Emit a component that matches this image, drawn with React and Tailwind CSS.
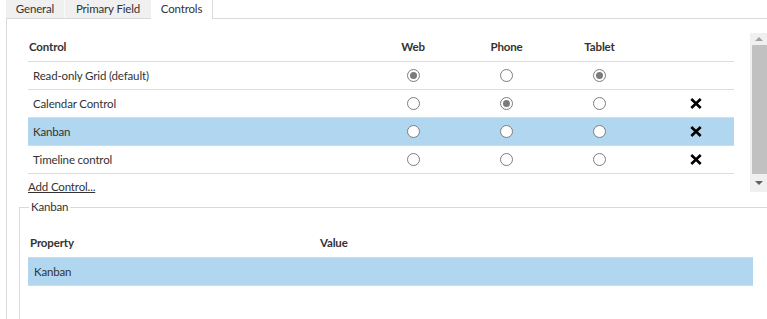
import React from "react";

function Radio({ checked }) {
  return (
    <span className="flex h-[13px] w-[13px] items-center justify-center rounded-full border border-[#7d7d7d] bg-white">
      {checked && <span className="h-[7px] w-[7px] rounded-full bg-[#7b7b7b]" />}
    </span>
  );
}

function XIcon() {
  return (
    <svg width="12" height="11" viewBox="0 0 12 11" className="block">
      <path d="M1.3 1 L10.7 10 M10.7 1 L1.3 10" stroke="#000" strokeWidth="2.6" strokeLinecap="butt" />
    </svg>
  );
}

const rows = [
  { name: "Read-only Grid (default)", web: true, phone: false, tablet: true, del: false },
  { name: "Calendar Control", web: false, phone: true, tablet: false, del: true },
  { name: "Kanban", web: false, phone: false, tablet: false, del: true, selected: true },
  { name: "Timeline control", web: false, phone: false, tablet: false, del: true },
];

export default function App() {
  return (
    <div
      className="relative h-[319px] w-[767px] overflow-hidden bg-white text-[11.5px] tracking-[-0.15px] text-[#333]"
      style={{ fontFamily: 'Lato, "Noto Sans", sans-serif' }}
    >
      {/* Tabs */}
      <div className="flex h-[19px] pl-[6px] leading-[18px]">
        <div className="w-[58px] border-b border-[#d9d9d9] bg-[#f0f0f0] text-center">General</div>
        <div className="w-[1px] border-b border-[#d9d9d9] bg-[#fafafa]" />
        <div className="w-[86px] border-b border-[#d9d9d9] bg-[#f0f0f0] text-center">Primary Field</div>
        <div className="w-[62px] border-r border-[#d9d9d9] bg-white text-center">Controls</div>
        <div className="flex-1 border-b border-[#d9d9d9]" />
      </div>

      {/* Panel */}
      <div className="ml-[6px] h-[300px] border-l border-[#d9d9d9]">
        {/* Controls grid */}
        <div className="flex gap-[16px] pl-[21px] pt-[14px]">
          <div className="w-[709px]">
            <div className="flex h-[29px] items-center border-b border-[#dcdcdc] font-bold">
              <div className="w-[338px] pl-[1px]">Control</div>
              <div className="w-[94px] text-center">Web</div>
              <div className="w-[93px] text-center">Phone</div>
              <div className="w-[93px] text-center">Tablet</div>
              <div className="flex-1" />
            </div>
            {rows.map((r) => (
              <div
                key={r.name}
                className={
                  "flex h-[28px] items-center border-b " +
                  (r.selected ? "border-[#c9dcea] bg-[#b1d6f0]" : "border-[#dcdcdc]")
                }
              >
                <div className="w-[338px] pl-[5px]">{r.name}</div>
                <div className="flex w-[94px] justify-center">
                  <Radio checked={r.web} />
                </div>
                <div className="flex w-[93px] justify-center">
                  <Radio checked={r.phone} />
                </div>
                <div className="flex w-[93px] justify-center">
                  <Radio checked={r.tablet} />
                </div>
                <div className="flex flex-1 pl-[44px]">{r.del && <XIcon />}</div>
              </div>
            ))}
            <div className="flex h-[26px] items-center">
              <span className="underline">Add Control...</span>
            </div>
          </div>

          {/* Scrollbar */}
          <div className="flex h-[159px] w-[17px] flex-col bg-[#f0f0f0]">
            <div className="flex h-[12px] items-center pl-[5px]">
              <span className="h-0 w-0 border-x-[4px] border-b-[4px] border-x-transparent border-b-[#a3a3a3]" />
            </div>
            <div className="ml-[2px] h-[129px] bg-[#c1c1c1]" />
            <div className="flex h-[18px] items-center pl-[5px]">
              <span className="h-0 w-0 border-x-[4px] border-t-[4px] border-x-transparent border-t-[#606060]" />
            </div>
          </div>
        </div>

        {/* Fieldset */}
        <fieldset className="ml-[12px] mt-[-1px] h-[140px] w-[780px] border-l border-t border-[#d9d9d9] pl-[8px]">
          <legend className="ml-[1px] px-[2px] leading-[16px]">Kanban</legend>
          <div className="pt-[14px]">
            <div className="flex h-[28px] items-center font-bold">
              <div className="w-[292px] pl-[2px]">Property</div>
              <div>Value</div>
            </div>
            <div className="flex h-[29px] w-[725px] items-center border-y border-[#c9dcea] bg-[#b1d6f0] pl-[6px]">
              Kanban
            </div>
          </div>
        </fieldset>
      </div>
    </div>
  );
}
